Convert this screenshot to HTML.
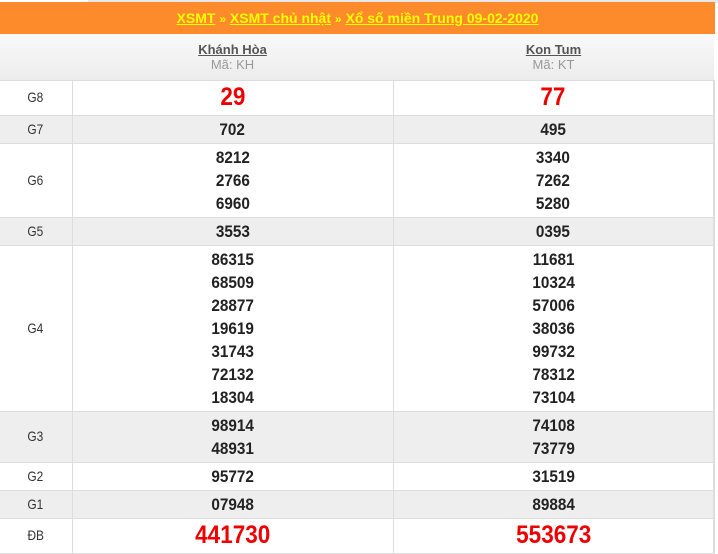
<!DOCTYPE html>
<html><head><meta charset="utf-8"><style>
*{margin:0;padding:0;box-sizing:border-box}
body{width:718px;height:554px;background:#fff;font-family:"Liberation Sans",sans-serif;position:relative;overflow:hidden}
.top{position:absolute;left:0;top:0;width:718px;height:3px;background:#e8e8e8}
.top i{position:absolute;left:0;top:0;width:88px;height:3px;background:#fff}
.hd{position:absolute;left:0;top:2px;width:715px;height:32px;background:#fd8b2c;text-align:center;font-weight:bold;font-size:14px;line-height:32px;color:#ff0}
.hd a{color:#ff0;text-decoration:underline}
.hd span{color:#ff0;font-size:12px}
table{position:absolute;left:0;top:34px;width:715px;border-collapse:collapse}
td{border:1px solid #ddd;text-align:center;color:#222;font-weight:bold;font-size:17px;line-height:23px;vertical-align:middle}
td>em{font-style:normal;display:inline-block;transform:scaleX(.9)}
td.l{width:72px;font-weight:normal;font-size:14px;color:#333;border-left:none}
td.l em{transform:scaleX(.85)}
tr.g td{background:#eee}
tr.h td{background:linear-gradient(#f9f9f9,#ececec);height:46px;font-size:13px;line-height:15px;border-left:none;border-right:none;border-top:none}
tr.h b{color:#555;text-decoration:underline;display:block}
tr.h s{text-decoration:none;color:#999;font-weight:normal;display:block}
td.r{color:#e00;font-size:25px}
td:last-child{border-right:2px solid #ddd}
</style></head><body>
<div class="top"><i></i></div>
<div class="hd"><a>XSMT</a> <span>»</span> <a>XSMT chủ nhật</a> <span>»</span> <a>Xổ số miền Trung 09-02-2020</a></div>
<table>
<tr class="h"><td class="l"></td><td style="width:321px"><b>Khánh Hòa</b><s>Mã: KH</s></td><td><b>Kon Tum</b><s>Mã: KT</s></td></tr>
<tr style="height:35px"><td class="l"><em>G8</em></td><td class="r"><em>29</em></td><td class="r"><em>77</em></td></tr>
<tr class="g" style="height:28px"><td class="l"><em>G7</em></td><td><em>702</em></td><td><em>495</em></td></tr>
<tr style="height:74px"><td class="l"><em>G6</em></td><td><em>8212<br>2766<br>6960</em></td><td><em>3340<br>7262<br>5280</em></td></tr>
<tr class="g" style="height:28px"><td class="l"><em>G5</em></td><td><em>3553</em></td><td><em>0395</em></td></tr>
<tr style="height:166px"><td class="l"><em>G4</em></td><td><em>86315<br>68509<br>28877<br>19619<br>31743<br>72132<br>18304</em></td><td><em>11681<br>10324<br>57006<br>38036<br>99732<br>78312<br>73104</em></td></tr>
<tr class="g" style="height:51px"><td class="l"><em>G3</em></td><td><em>98914<br>48931</em></td><td><em>74108<br>73779</em></td></tr>
<tr style="height:28px"><td class="l"><em>G2</em></td><td><em>95772</em></td><td><em>31519</em></td></tr>
<tr class="g" style="height:28px"><td class="l"><em>G1</em></td><td><em>07948</em></td><td><em>89884</em></td></tr>
<tr style="height:35px"><td class="l"><em>ĐB</em></td><td class="r"><em>441730</em></td><td class="r"><em>553673</em></td></tr>
</table>
</body></html>
